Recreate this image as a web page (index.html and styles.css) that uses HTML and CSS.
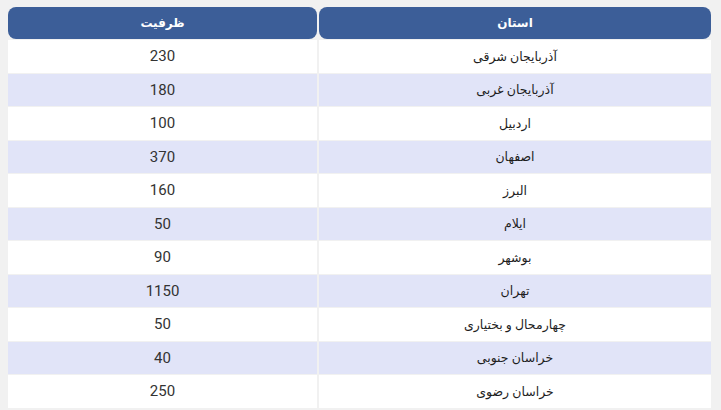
FILE: index.html
```html
<!DOCTYPE html>
<html lang="fa" dir="rtl">
<head>
<meta charset="utf-8">
<link rel="stylesheet" href="styles.css">
</head>
<body>
<table class="grid">
  <thead>
    <tr><th class="c-name">استان</th><th class="c-cap">ظرفیت</th></tr>
  </thead>
  <tbody>
    <tr><td>آذربایجان شرقی</td><td class="num">230</td></tr>
    <tr class="alt"><td>آذربایجان غربی</td><td class="num">180</td></tr>
    <tr><td>اردبیل</td><td class="num">100</td></tr>
    <tr class="alt"><td>اصفهان</td><td class="num">370</td></tr>
    <tr><td>البرز</td><td class="num">160</td></tr>
    <tr class="alt"><td>ایلام</td><td class="num">50</td></tr>
    <tr><td>بوشهر</td><td class="num">90</td></tr>
    <tr class="alt"><td>تهران</td><td class="num">1150</td></tr>
    <tr><td>چهارمحال و بختیاری</td><td class="num">50</td></tr>
    <tr class="alt"><td>خراسان جنوبی</td><td class="num">40</td></tr>
    <tr><td>خراسان رضوی</td><td class="num">250</td></tr>
  </tbody>
</table>
</body>
</html>
```
FILE: styles.css
```css
html, body {
  margin: 0;
  padding: 0;
  background: #f1f1f1;
}
body {
  padding: 6px 8px 0 6px;
  font-family: Roboto, "DejaVu Sans", sans-serif;
  color: #333333;
}
.grid {
  border-collapse: separate;
  border-spacing: 2px 1px;
  width: 707px;
  table-layout: fixed;
}
.c-name { width: 392px; }
.c-cap { width: 309px; }
th {
  background: #3c5e98;
  color: #ffffff;
  font-weight: bold;
  font-size: 12px;
  height: 32px;
  padding: 0;
  border-radius: 8px;
  text-align: center;
}
td {
  background: #ffffff;
  height: 32.5px;
  padding: 0;
  text-align: center;
  font-size: 12.5px;
  color: #1e1e1e;
}
td.num {
  font-size: 15px;
  color: #333333;
}
tr.alt td {
  background: #e1e4f8;
}
```
